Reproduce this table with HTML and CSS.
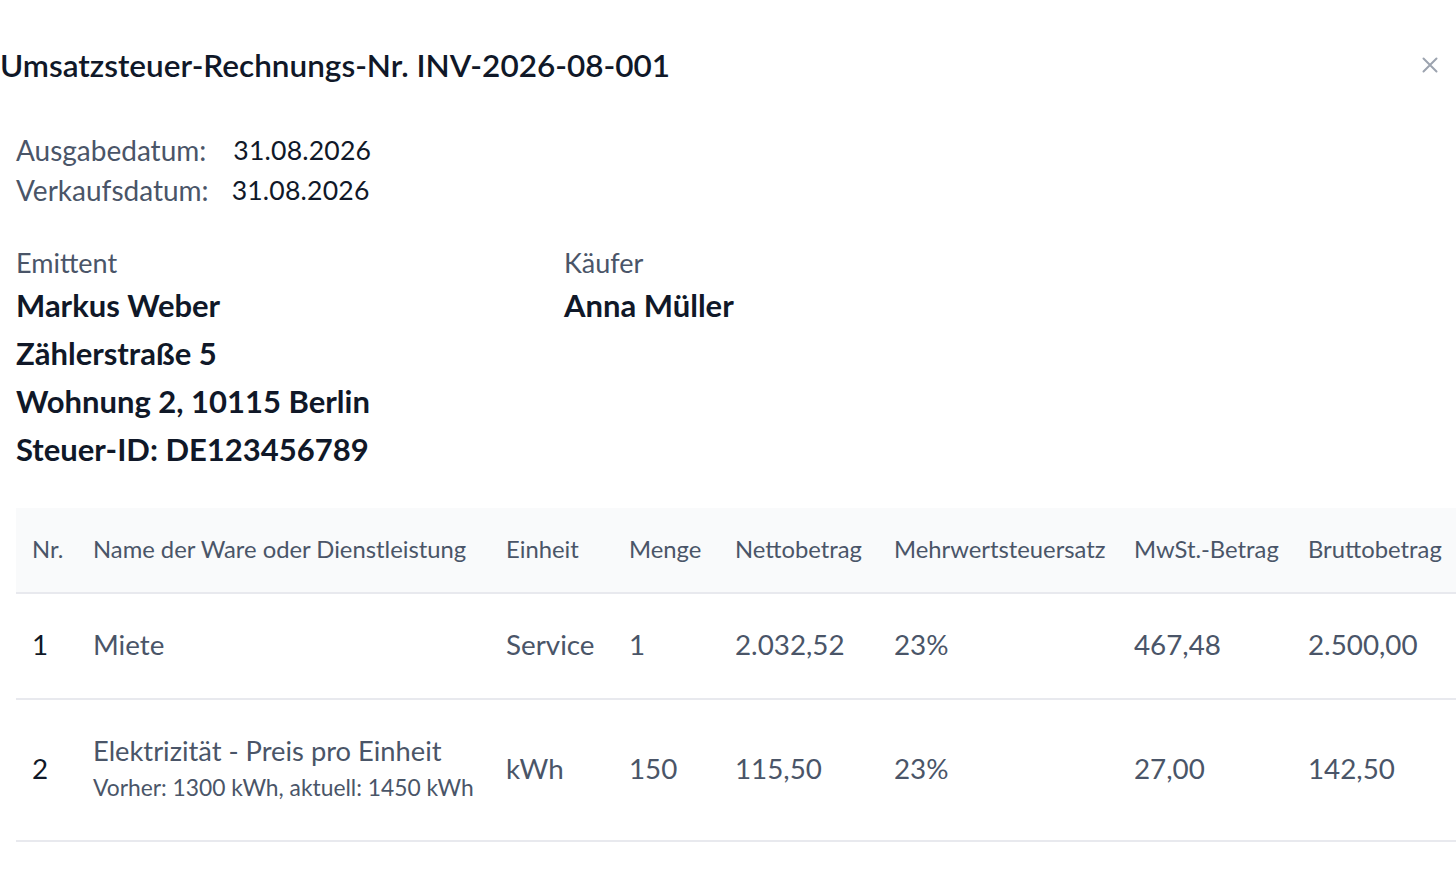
FILE: index.html
```html
<!DOCTYPE html>
<html lang="de">
<head>
<meta charset="utf-8">
<title>Rechnung</title>
<link rel="stylesheet" href="styles.css">
</head>
<body>
<div class="modal">
  <header class="modal-header">
    <h1 class="title">Umsatzsteuer-Rechnungs-Nr. INV-2026-08-001</h1>
    <button class="close" aria-label="Schließen">
      <svg width="16" height="16" viewBox="0 0 16 16"><path d="M1.5 1.5 L14.5 14.5 M14.5 1.5 L1.5 14.5" stroke="#9ca3af" stroke-width="2" stroke-linecap="round" fill="none"/></svg>
    </button>
  </header>
  <div class="modal-body">
    <div class="dates">
      <div class="date-row"><span class="date-label first">Ausgabedatum:</span><span class="date-value">31.08.2026</span></div>
      <div class="date-row"><span class="date-label second">Verkaufsdatum:</span><span class="date-value">31.08.2026</span></div>
    </div>
    <div class="parties">
      <div class="party">
        <div class="party-label">Emittent</div>
        <div class="party-line">Markus Weber</div>
        <div class="party-line">Zählerstraße 5</div>
        <div class="party-line">Wohnung 2, 10115 Berlin</div>
        <div class="party-line">Steuer-ID: DE123456789</div>
      </div>
      <div class="party">
        <div class="party-label">Käufer</div>
        <div class="party-line">Anna Müller</div>
      </div>
    </div>
    <table class="items">
      <colgroup>
        <col class="c-nr"><col class="c-name"><col class="c-unit"><col class="c-qty"><col class="c-net"><col class="c-rate"><col class="c-vat"><col class="c-gross">
      </colgroup>
      <thead>
        <tr>
          <th>Nr.</th><th>Name der Ware oder Dienstleistung</th><th>Einheit</th><th>Menge</th><th>Nettobetrag</th><th>Mehrwertsteuersatz</th><th>MwSt.-Betrag</th><th>Bruttobetrag</th>
        </tr>
      </thead>
      <tbody>
        <tr>
          <td class="nr">1</td><td>Miete</td><td>Service</td><td>1</td><td>2.032,52</td><td>23%</td><td>467,48</td><td>2.500,00</td>
        </tr>
        <tr>
          <td class="nr">2</td>
          <td><div class="item-name">Elektrizität - Preis pro Einheit</div><div class="item-sub">Vorher: 1300 kWh, aktuell: 1450 kWh</div></td>
          <td>kWh</td><td>150</td><td>115,50</td><td>23%</td><td>27,00</td><td>142,50</td>
        </tr>
      </tbody>
    </table>
  </div>
</div>
</body>
</html>
```
FILE: styles.css
```css
* { box-sizing: border-box; }
html, body { margin: 0; padding: 0; background: #ffffff; }
body {
  font-family: Lato, "Open Sans", sans-serif;
  color: #101828;
  overflow: hidden;
  width: 1456px;
  height: 872px;
}
.modal { width: 1456px; }
.modal-header {
  display: flex;
  justify-content: space-between;
  align-items: center;
  padding: 45px 18px 0 0;
}
.title {
  margin: 0;
  font-size: 31.5px;
  line-height: 40px;
  font-weight: 600;
  color: #101828;
}
.close {
  border: 0;
  background: none;
  padding: 0;
  width: 16px;
  height: 16px;
  display: flex;
}
.modal-body { padding: 45px 0 0 16px; }
.date-row { display: flex; align-items: center; height: 40px; line-height: 40px; }
.date-label { color: #4a5568; font-size: 28px; }
.date-value { color: #101828; font-size: 26.6px; letter-spacing: 0.2px; }
.date-label.first { margin-right: 27px; }
.date-label.second { margin-right: 23px; }
.parties {
  display: grid;
  grid-template-columns: 548px 1fr;
  margin-top: 35px;
}
.party-label { font-size: 27px; line-height: 36px; color: #4a5568; }
.party-line { font-size: 31px; line-height: 48px; font-weight: 700; color: #101828; }
.items {
  margin-top: 35px;
  width: 1440px;
  table-layout: fixed;
  border-collapse: collapse;
}
.c-nr { width: 61px; }
.c-name { width: 413px; }
.c-unit { width: 123px; }
.c-qty { width: 106px; }
.c-net { width: 159px; }
.c-rate { width: 240px; }
.c-vat { width: 174px; }
.c-gross { width: 164px; }
.items th {
  background: #f9fafb;
  font-weight: 400;
  font-size: 23.8px;
  line-height: 28px;
  color: #4a5568;
  text-align: left;
  padding: 27px 16px 29px;
  border-bottom: 2px solid #e8e9ee;
  white-space: nowrap;
}
.items td {
  font-size: 27.8px;
  line-height: 32px;
  color: #4a5568;
  padding: 35px 16px 37px;
  border-bottom: 2px solid #e8e9ee;
  vertical-align: middle;
  white-space: nowrap;
}
.items td.nr { color: #101828; }
.item-name { font-size: 27.3px; line-height: 32px; }
.item-sub { font-size: 22.8px; line-height: 32px; margin-top: 4px; }
```
